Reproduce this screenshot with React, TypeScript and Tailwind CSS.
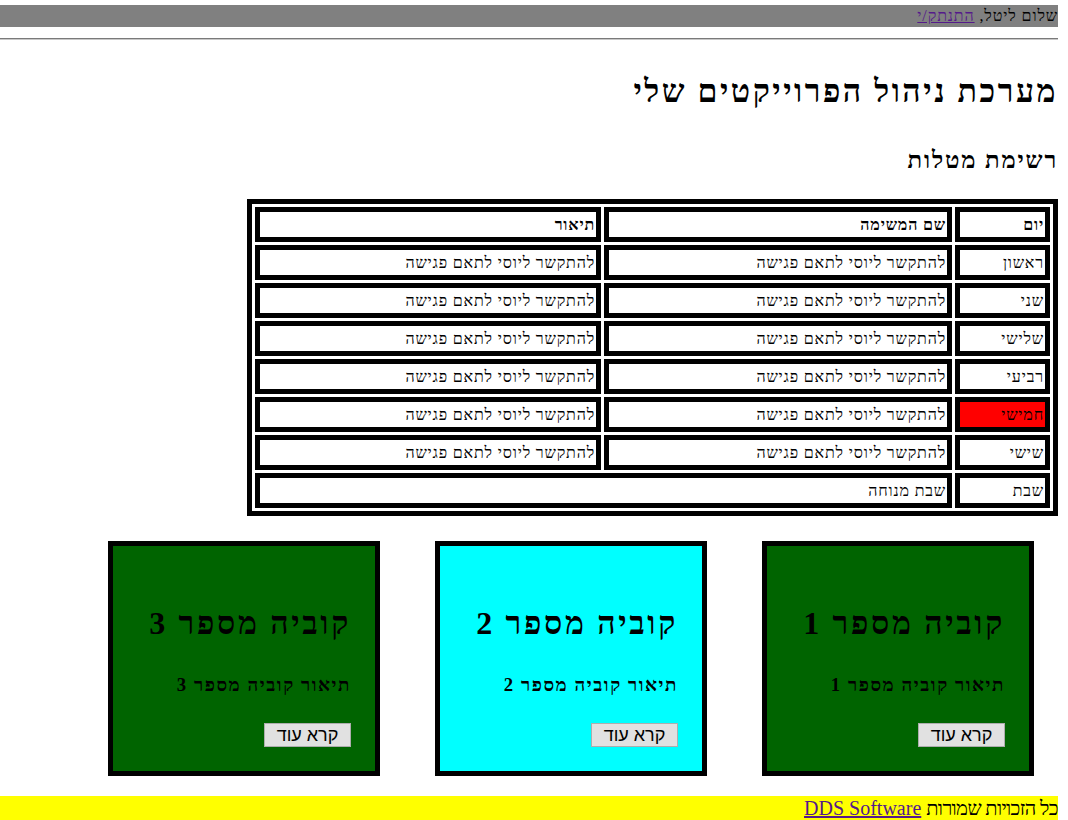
import React from 'react';

const days = ['ראשון', 'שני', 'שלישי', 'רביעי', 'חמישי', 'שישי'];
const task = 'להתקשר ליוסי לתאם פגישה';

const cubes = [
  { n: 1, bg: 'bg-[#006400]' },
  { n: 2, bg: 'bg-[#00ffff]' },
  { n: 3, bg: 'bg-[#006400]' },
];

const cell = 'border-[5px] border-black h-[35px] px-[1px] py-0 text-right align-middle tracking-[0.052em]';

const App: React.FC = () => {
  return (
    <div dir="rtl" className="w-[1058px] bg-white text-black font-['Liberation_Serif','DejaVu_Serif',serif] text-[16px]">
      <div className="mt-[5px] h-[22px] bg-[#808080] leading-[22px] text-right tracking-[0.055em]">
        שלום ליטל, <a href="#" className="text-[#551a8b] underline">התנתק/י</a>
      </div>

      <div className="mt-[11px] border-t border-t-[#7a7a7a] border-b border-b-[#c8c8c8]" />

      <h1 className="mt-[33px] text-[32px] font-bold leading-[37px] tracking-[0.078em]">מערכת ניהול הפרוייקטים שלי</h1>
      <h2 className="mt-[36px] text-[24px] font-bold leading-[28px] tracking-[0.075em]">רשימת מטלות</h2>

      <div className="mt-[25px] flex">
        <table className="w-[811px] table-fixed border-separate border-spacing-[3px] border-[5px] border-black">
          <thead>
            <tr>
              <th className={`${cell} w-[95px] font-bold`}>יום</th>
              <th className={`${cell} w-[348px] font-bold`}>שם המשימה</th>
              <th className={`${cell} font-bold`}>תיאור</th>
            </tr>
          </thead>
          <tbody>
            {days.map((d) => (
              <tr key={d}>
                <td className={`${cell} ${d === 'חמישי' ? 'bg-[#ff0000]' : ''}`}>{d}</td>
                <td className={cell}>{task}</td>
                <td className={cell}>{task}</td>
              </tr>
            ))}
            <tr>
              <td className={cell}>שבת</td>
              <td className={cell} colSpan={2}>שבת מנוחה</td>
            </tr>
          </tbody>
        </table>
      </div>

      <div className="mt-[25px] flex gap-[55px] pr-[24px]">
        {cubes.map((c) => (
          <div key={c.n} className={`w-[272px] h-[235px] border-[5px] border-black ${c.bg} pt-[59px] pr-[24px] text-right`}>
            <h1 className="text-[32px] font-bold leading-[37px] tracking-[0.083em]">קוביה מספר {c.n}</h1>
            <h3 className="mt-[32px] text-[18.72px] font-bold leading-[22px] tracking-[0.083em]">תיאור קוביה מספר {c.n}</h3>
            <button className="mt-[27px] w-[87px] h-[24px] bg-[#e1e1e1] border border-[#adadad] font-['Liberation_Sans','DejaVu_Sans',sans-serif] text-[18px] leading-[20px]">
              קרא עוד
            </button>
          </div>
        ))}
      </div>

      <div className="mt-[20px] h-[24px] bg-[#ffff00] leading-[24px] text-right text-[20px]">
        <span className="tracking-[-0.03em]">כל הזכויות שמורות</span>{' '}
        <a href="#" className="text-[#551a8b] underline">DDS Software</a>
      </div>
    </div>
  );
};

export default App;
